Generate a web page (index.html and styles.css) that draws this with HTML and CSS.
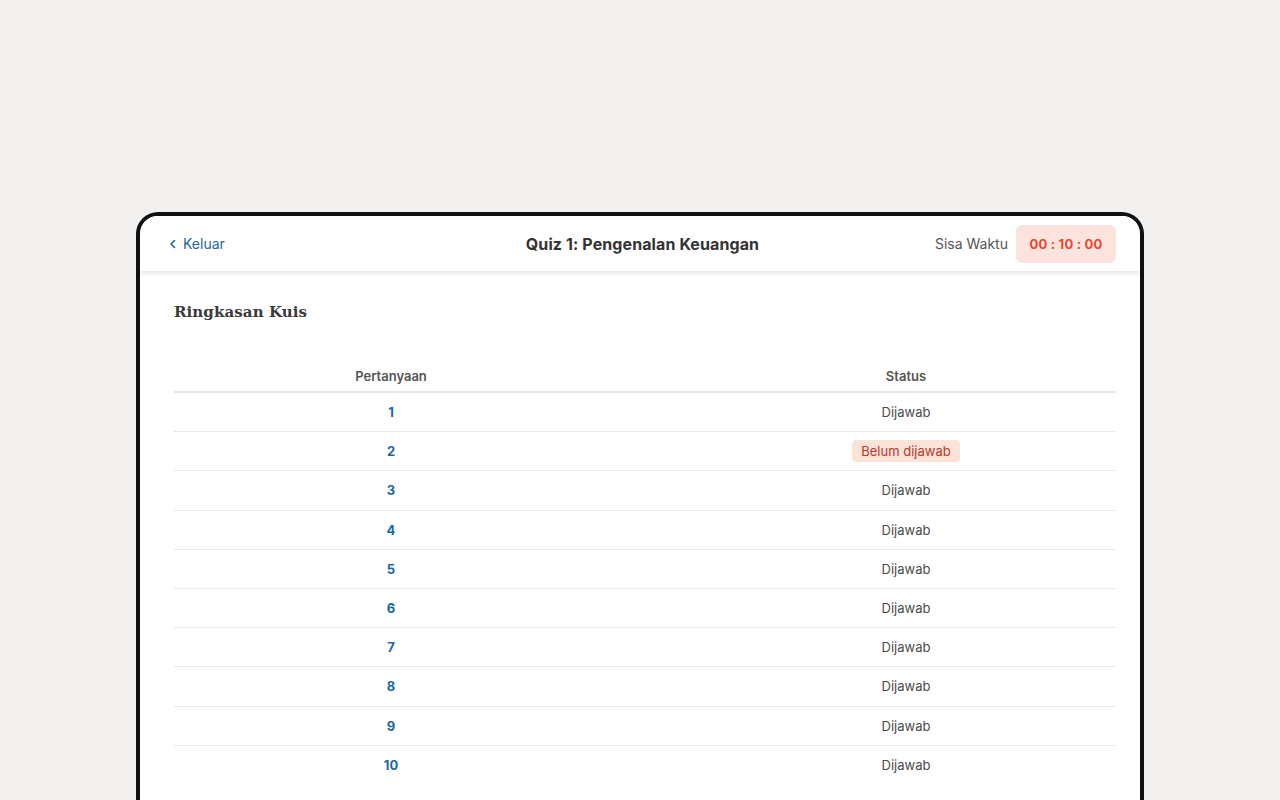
FILE: index.html
```html
<!DOCTYPE html>
<html lang="id">
<head>
<meta charset="utf-8">
<title>Quiz 1: Pengenalan Keuangan</title>
<link rel="stylesheet" href="styles.css">
</head>
<body>
<div class="page">
  <div class="device">
    <header class="topbar">
      <a class="back" href="#">
        <svg width="8" height="10" viewBox="0 0 8 10" aria-hidden="true"><path d="M5.5 1.5 2 5l3.5 3.5" fill="none" stroke="#1b66a3" stroke-width="1.6" stroke-linecap="round" stroke-linejoin="round"/></svg>
        <span>Keluar</span>
      </a>
      <h1 class="title">Quiz 1: Pengenalan Keuangan</h1>
      <div class="timer-wrap">
        <span class="timer-label">Sisa Waktu</span>
        <span class="timer">00 : 10 : 00</span>
      </div>
    </header>
    <main class="content">
      <h2 class="heading">Ringkasan Kuis</h2>
      <div class="table">
        <div class="row head"><div class="c1">Pertanyaan</div><div class="c2">Status</div></div>
        <div class="row"><div class="c1 num">1</div><div class="c2">Dijawab</div></div>
        <div class="row"><div class="c1 num">2</div><div class="c2"><span class="badge">Belum dijawab</span></div></div>
        <div class="row"><div class="c1 num">3</div><div class="c2">Dijawab</div></div>
        <div class="row"><div class="c1 num">4</div><div class="c2">Dijawab</div></div>
        <div class="row"><div class="c1 num">5</div><div class="c2">Dijawab</div></div>
        <div class="row"><div class="c1 num">6</div><div class="c2">Dijawab</div></div>
        <div class="row"><div class="c1 num">7</div><div class="c2">Dijawab</div></div>
        <div class="row"><div class="c1 num">8</div><div class="c2">Dijawab</div></div>
        <div class="row"><div class="c1 num">9</div><div class="c2">Dijawab</div></div>
        <div class="row last"><div class="c1 num">10</div><div class="c2">Dijawab</div></div>
      </div>
    </main>
  </div>
</div>
</body>
</html>
```

FILE: styles.css
```css
* { box-sizing: border-box; }
html, body { margin: 0; padding: 0; }
body {
  background: #f2f1ef;
  font-family: Inter, "Noto Sans", "Liberation Sans", sans-serif;
  color: #3b3b3b;
  overflow: hidden;
  height: 800px;
}
.page { padding-top: 212px; }
.device {
  width: 1008px;
  height: 620px;
  margin: 0 auto;
  background: #fff;
  border: 4px solid #111;
  border-bottom: none;
  border-radius: 22px 22px 0 0;
  overflow: hidden;
}
.topbar {
  height: 55px;
  display: flex;
  align-items: center;
  justify-content: space-between;
  padding: 0 24px 0 29px;
  background: #fff;
  box-shadow: 0 2px 5px rgba(0,0,0,0.12);
  position: relative;
  z-index: 1;
}
.back {
  display: flex;
  align-items: center;
  gap: 6px;
  color: #1b66a3;
  text-decoration: none;
  font-size: 14px;
  width: 240px;
}
.title {
  margin: 0;
  font-size: 16px;
  font-weight: 700;
  color: #333;
  letter-spacing: 0.1px;
}
.timer-wrap {
  width: 240px;
  display: flex;
  align-items: center;
  justify-content: flex-end;
  gap: 8px;
}
.timer-label { font-size: 14px; color: #555; }
.timer {
  background: #fde3de;
  color: #e8462f;
  font-weight: 700;
  font-size: 13px;
  height: 38px;
  width: 100px;
  border-radius: 6px;
  display: flex;
  align-items: center;
  justify-content: center;
  letter-spacing: 0.2px;
}
.content { padding: 32px 24px 0 34px; }
.heading {
  margin: 0 0 42px;
  font-family: "DejaVu Serif", "Liberation Serif", serif;
  font-size: 15px;
  font-weight: 700;
  color: #3a3a3a;
  letter-spacing: 0.1px;
}
.table { width: 942px; font-size: 13px; }
.row {
  display: grid;
  grid-template-columns: 434px 1fr;
  height: 39.2px;
  align-items: center;
  border-bottom: 1px solid #e8e8e8;
}
.row.head { height: 30px; align-items: start; border-bottom: 2px solid #e6e6e6; padding-top: 5px; }
.row.last { border-bottom: none; }
.c1 { text-align: center; }
.c2 { text-align: center; padding-left: 88px; color: #4a4a4a; }
.head .c1, .head .c2 { font-weight: 600; color: #555; }
.num { color: #1b66a3; font-weight: 700; }
.badge {
  display: inline-block;
  background: #fbe3d8;
  color: #b9372a;
  padding: 3px 9px;
  border-radius: 4px;
  font-size: 13px;
}
```
